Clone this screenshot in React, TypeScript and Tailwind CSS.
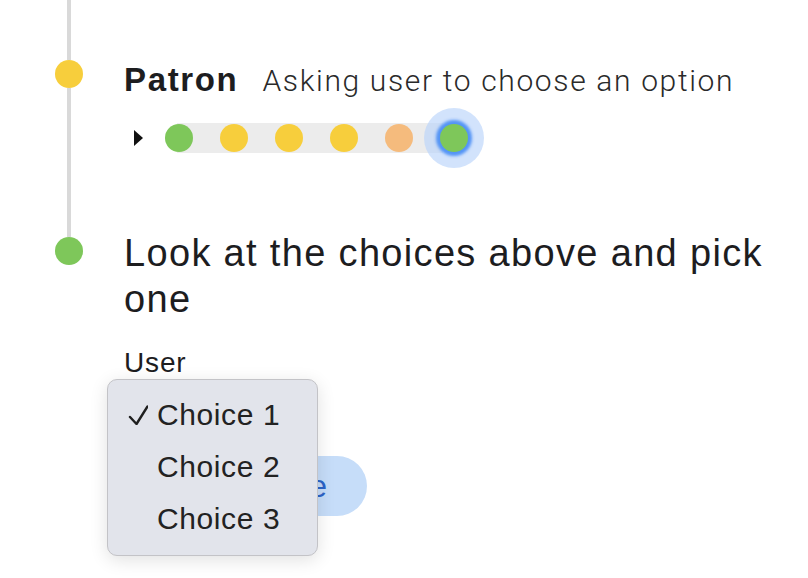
import React from 'react'

const dots = ['#7ec75a', '#f7ce3c', '#f7ce3c', '#f7ce3c', '#f5bb7d']

function Caret(): JSX.Element {
  return (
    <svg width="9" height="16" viewBox="0 0 9 16" className="shrink-0">
      <path d="M0 0 L9 8 L0 16 Z" fill="#111" />
    </svg>
  )
}

function Check(): JSX.Element {
  return (
    <svg width="20" height="20" viewBox="0 0 20 20" className="shrink-0">
      <path d="M2 12 L8.5 19 L19.5 1.5" fill="none" stroke="#1f1f1f" strokeWidth="2.4" strokeLinecap="round" strokeLinejoin="round" />
    </svg>
  )
}

export default function App(): JSX.Element {
  const choices = ['Choice 1', 'Choice 2', 'Choice 3']

  return (
    <div className="relative w-[808px] h-[578px] overflow-hidden bg-white text-[#1d1d1f] font-['Liberation_Sans',Arial,sans-serif]">
      {/* Patron step */}
      <div className="flex">
        <div className="w-[124px] pl-[55px] flex">
          <div className="w-7 flex flex-col items-center">
            <div className="w-1 h-[60px] bg-[#d9d9d9]" />
            <div className="w-7 h-7 rounded-full bg-[#f7ce3c]" />
            <div className="w-1 flex-1 bg-[#d9d9d9]" />
          </div>
        </div>
        <div className="pt-[60px] pb-[77px]">
          <div className="flex items-baseline h-[40px] leading-[40px]">
            <span className="text-[33px] font-bold tracking-[0.05em]">Patron</span>
            <span className="ml-[24px] text-[30px] text-[#2a2a2a] font-['Roboto',sans-serif] font-light tracking-[0.055em]">
              Asking user to choose an option
            </span>
          </div>
          <div className="mt-[23px] flex items-center h-[30px]">
            <div className="ml-[10px]">
              <Caret />
            </div>
            <div className="ml-[34px] flex items-center gap-[27px] h-[30px] bg-[#ececec]">
              {dots.map((c, i) => (
                <div
                  key={i}
                  className={i === 0 ? 'w-7 h-7 rounded-full -ml-[12px]' : 'w-7 h-7 rounded-full'}
                  style={{ backgroundColor: c }}
                />
              ))}
              <div className="w-7 h-7 rounded-full bg-[#7ec75a] -mr-[25px] shadow-[0_0_3px_4px_rgba(70,140,245,0.9),0_0_0_16px_rgba(186,212,250,0.65)]" />
            </div>
          </div>
        </div>
      </div>

      {/* User step */}
      <div className="flex">
        <div className="w-[124px] pl-[55px] flex">
          <div className="w-7 flex flex-col items-center">
            <div className="w-1 h-[7px] bg-[#d9d9d9]" />
            <div className="w-7 h-7 rounded-full bg-[#7ec75a]" />
          </div>
        </div>
        <div className="flex flex-col items-start">
          <h2 className="w-[660px] text-[38px] leading-[46px] font-normal tracking-[0.035em]">
            Look at the choices above and pick one
          </h2>
          <div className="mt-[24px] text-[28px] leading-[34px] tracking-[0.03em]">User</div>
          <button className="mt-[76px] w-[243px] h-[60px] rounded-full bg-[#c6ddf9] text-[#2c64c8] text-[32px] flex items-center justify-end pr-[40px]">
            Continue
          </button>
        </div>
      </div>

      {/* Open select menu */}
      <div className="absolute left-[107px] top-[379px] w-[211px] rounded-[10px] border border-[#c3c3c7] bg-[#e2e4eb] pt-[9px] pb-[10px] shadow-[0_4px_18px_rgba(0,0,0,0.12)]">
        {choices.map((c, i) => (
          <div key={c} className="flex items-center h-[52px] pl-[20px] text-[30px] leading-[52px] tracking-[0.02em] text-[#222]">
            <div className="w-[29px] flex items-center">{i === 0 && <Check />}</div>
            <span>{c}</span>
          </div>
        ))}
      </div>
    </div>
  )
}
